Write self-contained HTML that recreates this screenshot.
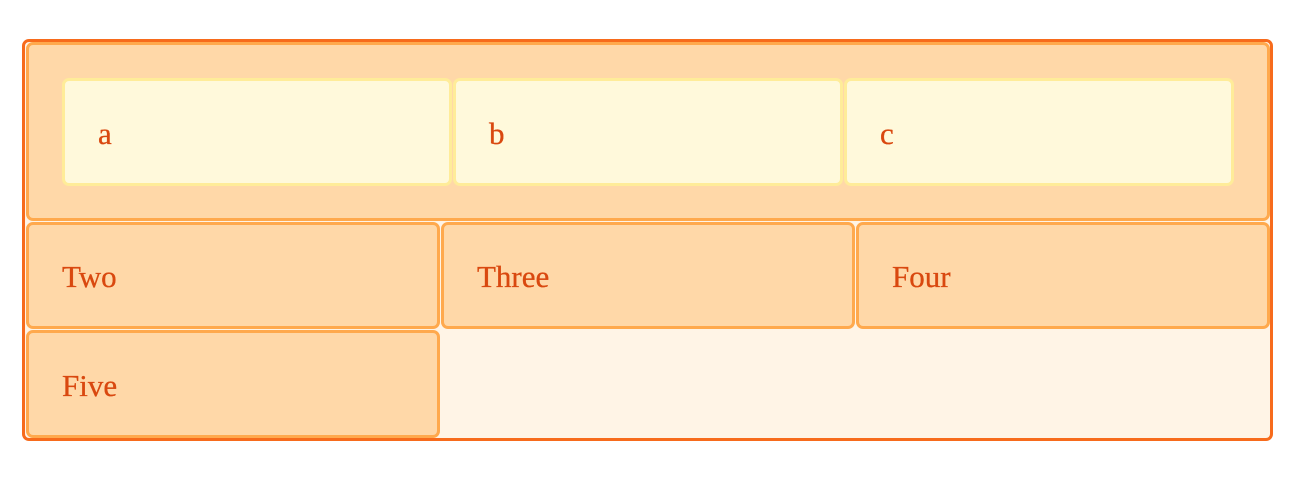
<!DOCTYPE html>
<html><head><style>
html,body{margin:0;padding:0;background:#fff;width:1294px;height:480px;overflow:hidden}
.b{position:absolute;box-sizing:border-box;border-radius:7px;font-family:"Liberation Serif",serif;font-size:31px;color:#d9480f;display:flex;align-items:center;padding-top:3px;-webkit-text-stroke:0.3px #d9480f}
.o{left:22px;top:39px;width:1251px;height:402px;border:3px solid #f76b1c;background:#fff4e6}
.i{background:#ffd8a8;border:3px solid #ffa94d;padding-left:33px}
.s{background:#fff9db;border:3px solid #ffec99;padding-left:33px}
</style></head><body>
<div class="b o"></div>
<div class="b i" style="left:26px;top:42px;width:1244px;height:179px"></div>
<div class="b s" style="left:62px;top:78px;width:390px;height:108px">a</div>
<div class="b s" style="left:453px;top:78px;width:390px;height:108px">b</div>
<div class="b s" style="left:844px;top:78px;width:390px;height:108px">c</div>
<div class="b i" style="left:26px;top:222px;width:414px;height:107px">Two</div>
<div class="b i" style="left:441px;top:222px;width:414px;height:107px">Three</div>
<div class="b i" style="left:856px;top:222px;width:414px;height:107px">Four</div>
<div class="b i" style="left:26px;top:330px;width:414px;height:108px">Five</div>
</body></html>
